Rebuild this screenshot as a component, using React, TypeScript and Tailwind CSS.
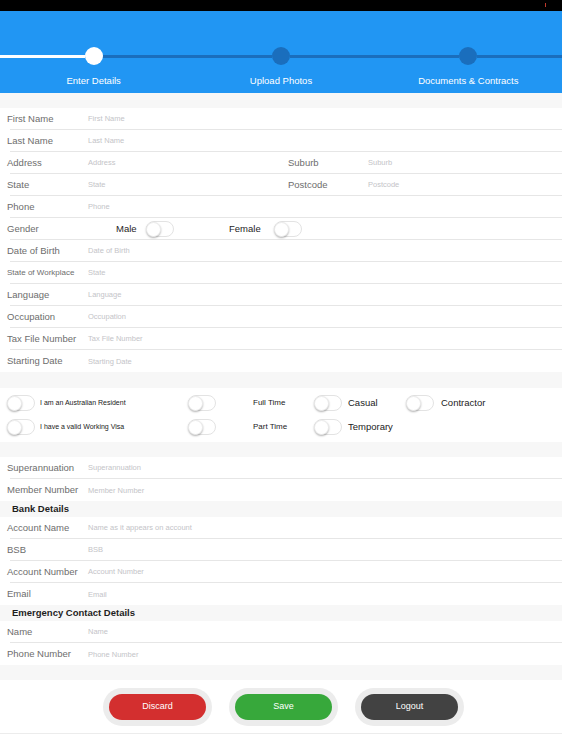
import React from 'react'

type Field = { label: string; placeholder: string; small?: boolean; right?: { label: string; placeholder: string } }

const personal: Field[] = [
  { label: 'First Name', placeholder: 'First Name' },
  { label: 'Last Name', placeholder: 'Last Name' },
  { label: 'Address', placeholder: 'Address', right: { label: 'Suburb', placeholder: 'Suburb' } },
  { label: 'State', placeholder: 'State', right: { label: 'Postcode', placeholder: 'Postcode' } },
  { label: 'Phone', placeholder: 'Phone' },
]

const personal2: Field[] = [
  { label: 'Date of Birth', placeholder: 'Date of Birth' },
  { label: 'State of Workplace', placeholder: 'State', small: true },
  { label: 'Language', placeholder: 'Language' },
  { label: 'Occupation', placeholder: 'Occupation' },
  { label: 'Tax File Number', placeholder: 'Tax File Number' },
  { label: 'Starting Date', placeholder: 'Starting Date' },
]

const superFields: Field[] = [
  { label: 'Superannuation', placeholder: 'Superannuation' },
  { label: 'Member Number', placeholder: 'Member Number' },
]

const bankFields: Field[] = [
  { label: 'Account Name', placeholder: 'Name as it appears on account' },
  { label: 'BSB', placeholder: 'BSB' },
  { label: 'Account Number', placeholder: 'Account Number' },
  { label: 'Email', placeholder: 'Email' },
]

const emergencyFields: Field[] = [
  { label: 'Name', placeholder: 'Name' },
  { label: 'Phone Number', placeholder: 'Phone Number' },
]

const steps = ['Enter Details', 'Upload Photos', 'Documents & Contracts']

function Toggle() {
  return (
    <div className="w-[28px] h-[16px] rounded-full border border-[#e3e3e3] bg-white flex items-center shrink-0">
      <div className="w-[15px] h-[15px] rounded-full bg-white shadow-[0_1px_2px_rgba(0,0,0,0.3)] border border-[#ececec] -ml-px" />
    </div>
  )
}

function Row({ field, last }: { field: Field; last?: boolean }) {
  return (
    <div className="h-[22px] flex pl-[10px]">
      <div className={`flex-1 flex items-center pt-px ${last ? '' : 'border-b border-[#e6e6e6]'}`}>
        <div className="flex items-center w-[281px] -ml-[3px]">
          <span className={`w-[81px] text-[#6d6d6d] whitespace-nowrap ${field.small ? 'text-[8px]' : 'text-[9.5px]'}`}>
            {field.label}
          </span>
          <span className="text-[7.5px] text-[#c4c4c8]">{field.placeholder}</span>
        </div>
        {field.right && (
          <div className="flex items-center">
            <span className="w-[80px] text-[9.5px] text-[#6d6d6d]">{field.right.label}</span>
            <span className="text-[7.5px] text-[#c4c4c8]">{field.right.placeholder}</span>
          </div>
        )}
      </div>
    </div>
  )
}

function Group({ fields }: { fields: Field[] }) {
  return (
    <div className="bg-white">
      {fields.map((f, i) => (
        <Row key={f.label} field={f} last={i === fields.length - 1} />
      ))}
    </div>
  )
}

function SectionHeader({ title }: { title: string }) {
  return (
    <div className="h-[16px] bg-[#f7f7f7] flex items-center pl-[12px] text-[9.5px] font-bold text-[#1e1e1e]">
      {title}
    </div>
  )
}

function PillButton({ label, color }: { label: string; color: string }) {
  return (
    <div className="w-[109px] h-[38px] rounded-full bg-[#ececec] p-[6px] flex">
      <div className={`flex-1 rounded-full ${color} flex items-center justify-center text-[9px] text-white`}>
        {label}
      </div>
    </div>
  )
}

export default function App() {
  return (
    <div className="w-[562px] h-[750px] bg-white overflow-hidden" style={{ fontFamily: '"Liberation Sans", Arial, sans-serif' }}>
      {/* status bar */}
      <div className="h-[11px] bg-black flex justify-end items-start pr-[16px] pt-[3px]">
        <div className="w-[1px] h-[4px] bg-[#c0392b]" />
      </div>

      {/* stepper */}
      <div className="h-[82px] bg-[#2196f3] grid grid-cols-3 pt-[36px]">
        {steps.map((s, i) => (
          <div key={s} className="flex flex-col items-center">
            <div className="w-full flex items-center h-[18px]">
              <div className={`flex-1 h-[3px] ${i === 0 ? 'bg-white' : 'bg-[#1a6ebd]'}`} />
              <div className={`w-[18px] h-[18px] rounded-full ${i === 0 ? 'bg-white' : 'bg-[#1a6ebd]'}`} />
              <div className="flex-1 h-[3px] bg-[#1a6ebd]" />
            </div>
            <span className="mt-[9px] text-[9.5px] text-white">{s}</span>
          </div>
        ))}
      </div>

      <div className="h-[15px] bg-[#f7f7f7]" />

      <div className="bg-white">
        {personal.map(f => (
          <Row key={f.label} field={f} />
        ))}
        <div className="h-[22px] flex pl-[10px]">
          <div className="flex-1 flex items-center pt-px border-b border-[#e6e6e6]">
            <span className="w-[109px] -ml-[3px] text-[9.5px] text-[#6d6d6d]">Gender</span>
            <span className="w-[30px] text-[9.5px] text-[#1e1e1e]">Male</span>
            <Toggle />
            <span className="ml-[55px] w-[45px] text-[9.5px] text-[#1e1e1e]">Female</span>
            <Toggle />
          </div>
        </div>
        {personal2.map((f, i) => (
          <Row key={f.label} field={f} last={i === personal2.length - 1} />
        ))}
      </div>

      <div className="h-[16px] bg-[#f7f7f7]" />

      <div className="bg-white h-[54px] flex flex-col justify-center gap-[8px] pl-[7px]">
        <div className="flex items-center">
          <Toggle />
          <span className="ml-[5px] w-[148px] text-[7px] text-[#222]">I am an Australian Resident</span>
          <Toggle />
          <span className="ml-[37px] w-[61px] text-[8px] text-[#222]">Full Time</span>
          <Toggle />
          <span className="ml-[6px] w-[58px] text-[9.5px] text-[#222]">Casual</span>
          <Toggle />
          <span className="ml-[7px] text-[9.5px] text-[#222]">Contractor</span>
        </div>
        <div className="flex items-center">
          <Toggle />
          <span className="ml-[5px] w-[148px] text-[7px] text-[#222]">I have a valid Working Visa</span>
          <Toggle />
          <span className="ml-[37px] w-[61px] text-[8px] text-[#222]">Part Time</span>
          <Toggle />
          <span className="ml-[6px] text-[9.5px] text-[#222]">Temporary</span>
        </div>
      </div>

      <div className="h-[15px] bg-[#f7f7f7]" />
      <Group fields={superFields} />
      <SectionHeader title="Bank Details" />
      <Group fields={bankFields} />
      <SectionHeader title="Emergency Contact Details" />
      <Group fields={emergencyFields} />

      <div className="h-[15px] bg-[#f7f7f7]" />

      <div className="h-[54px] bg-white border-b border-[#ececec] flex items-center pl-[103px] gap-[17px]">
        <PillButton label="Discard" color="bg-[#d32f2f]" />
        <PillButton label="Save" color="bg-[#37a83b]" />
        <PillButton label="Logout" color="bg-[#424242]" />
      </div>
    </div>
  )
}
